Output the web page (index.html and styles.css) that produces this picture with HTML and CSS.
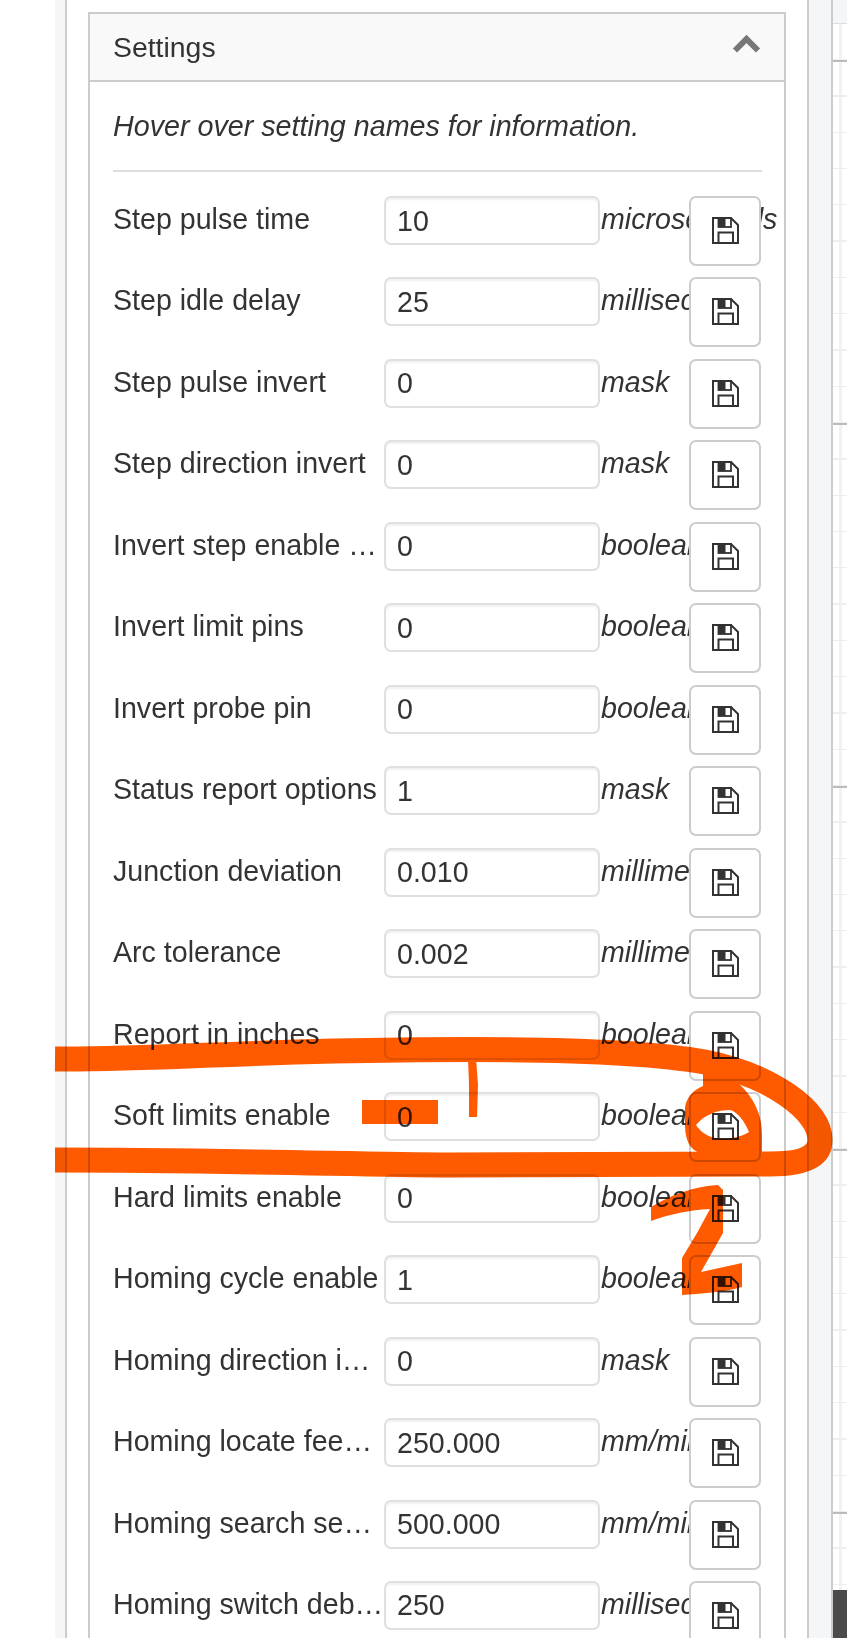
FILE: index.html
```html
<!DOCTYPE html>
<html lang="en">
<head>
    <meta charset="UTF-8">
    <meta name="viewport" content="width=device-width, initial-scale=1.0">
    <title>Settings</title>
    <link rel="stylesheet" href="styles.css">
</head>
<body>
    <svg width="0" height="0" class="defs">
        <symbol id="save" viewBox="0 0 27 27">
            <path d="M1 1H19L26 8V26H1Z" fill="none" stroke="#333" stroke-width="2"/>
            <rect x="6.5" y="1" width="12.5" height="9" fill="none" stroke="#333" stroke-width="1.8"/>
            <rect x="6.5" y="1" width="7" height="9" fill="#333"/>
            <rect x="6.5" y="15.5" width="14.5" height="10.5" fill="none" stroke="#333" stroke-width="2"/>
        </symbol>
    </svg>
    <div class="page">
        <div class="side-strip"></div>
        <div class="wrap">
            <div class="panel">
                <div class="panel-heading">
                    <span class="panel-title">Settings</span>
                    <svg class="chevron" viewBox="0 0 29 18"><path d="M3 15.5L14.5 4L26 15.5" fill="none" stroke="#777" stroke-width="6"/></svg>
                </div>
                <div class="panel-body">
                    <p class="hint">Hover over setting names for information.</p>
                    <hr class="divider">
                    <div id="rows">
                        <div class="row"><span class="name">Step pulse time</span><input class="value" value="10"><span class="unit">microseconds</span><button class="save"><svg><use href="#save"/></svg></button></div>
                        <div class="row"><span class="name">Step idle delay</span><input class="value" value="25"><span class="unit">milliseconds</span><button class="save"><svg><use href="#save"/></svg></button></div>
                        <div class="row"><span class="name">Step pulse invert</span><input class="value" value="0"><span class="unit">mask</span><button class="save"><svg><use href="#save"/></svg></button></div>
                        <div class="row"><span class="name">Step direction invert</span><input class="value" value="0"><span class="unit">mask</span><button class="save"><svg><use href="#save"/></svg></button></div>
                        <div class="row"><span class="name">Invert step enable pin</span><input class="value" value="0"><span class="unit">boolean</span><button class="save"><svg><use href="#save"/></svg></button></div>
                        <div class="row"><span class="name">Invert limit pins</span><input class="value" value="0"><span class="unit">boolean</span><button class="save"><svg><use href="#save"/></svg></button></div>
                        <div class="row"><span class="name">Invert probe pin</span><input class="value" value="0"><span class="unit">boolean</span><button class="save"><svg><use href="#save"/></svg></button></div>
                        <div class="row"><span class="name">Status report options</span><input class="value" value="1"><span class="unit">mask</span><button class="save"><svg><use href="#save"/></svg></button></div>
                        <div class="row"><span class="name">Junction deviation</span><input class="value" value="0.010"><span class="unit">millimeters</span><button class="save"><svg><use href="#save"/></svg></button></div>
                        <div class="row"><span class="name">Arc tolerance</span><input class="value" value="0.002"><span class="unit">millimeters</span><button class="save"><svg><use href="#save"/></svg></button></div>
                        <div class="row"><span class="name">Report in inches</span><input class="value" value="0"><span class="unit">boolean</span><button class="save"><svg><use href="#save"/></svg></button></div>
                        <div class="row"><span class="name">Soft limits enable</span><input class="value" value="0"><span class="unit">boolean</span><button class="save"><svg><use href="#save"/></svg></button></div>
                        <div class="row"><span class="name">Hard limits enable</span><input class="value" value="0"><span class="unit">boolean</span><button class="save"><svg><use href="#save"/></svg></button></div>
                        <div class="row"><span class="name">Homing cycle enable</span><input class="value" value="1"><span class="unit">boolean</span><button class="save"><svg><use href="#save"/></svg></button></div>
                        <div class="row"><span class="name">Homing direction invert</span><input class="value" value="0"><span class="unit">mask</span><button class="save"><svg><use href="#save"/></svg></button></div>
                        <div class="row"><span class="name">Homing locate feed rate</span><input class="value" value="250.000"><span class="unit">mm/min</span><button class="save"><svg><use href="#save"/></svg></button></div>
                        <div class="row"><span class="name">Homing search seek rate</span><input class="value" value="500.000"><span class="unit">mm/min</span><button class="save"><svg><use href="#save"/></svg></button></div>
                        <div class="row"><span class="name">Homing switch debounce</span><input class="value" value="250"><span class="unit">milliseconds</span><button class="save"><svg><use href="#save"/></svg></button></div>
                    </div>
                </div>
            </div>
        </div>
        <div class="gutter"></div>
        <div class="chart">
            <div class="chart-head"></div>
            <div class="chart-grid"></div>
            <div class="chart-foot"></div>
        </div>
    </div>

    <!-- marker scribbles on top of the screenshot -->
    <svg class="scribble" viewBox="0 0 847 1638" width="847" height="1638">
        <path d="M55 1059C150 1060 250 1051 400 1050C550 1048 650 1052 705 1062C770 1075 820 1110 820 1140C820 1158 800 1164 770 1164L450 1165C350 1164 200 1160 55 1160" fill="none" stroke="#ff5a00" stroke-width="25"/>
        <path fill-rule="evenodd" fill="#ff5a00" d="M703 1072H728L745 1090C757 1104 762 1118 762 1135V1153H700C690 1150 685 1140 685 1125V1108C686 1098 693 1090 703 1086ZM696 1125C705 1114 718 1110 730 1110C738 1112 745 1122 749 1132C740 1138 725 1140 715 1138C706 1136 700 1131 696 1125Z"/>
        <path fill="#ff5a00" d="M468 1058H476L478 1085L477 1117H469L469 1085Z"/>
        <rect x="362" y="1100" width="76" height="24" fill="#ff5a00"/>
        <path fill="#ff5a00" d="M651 1207C670 1195 695 1186 718 1185L723 1190V1233L701 1272L742 1263V1287C725 1292 700 1294 682 1295V1258L697 1233L710 1209C690 1210 670 1214 651 1221Z"/>
    </svg>
</body>
</html>
```
FILE: styles.css
```css
* {
    box-sizing: border-box;
}
html, body {
    margin: 0;
    height: 1638px;
    overflow: hidden;
    background: #fff;
}
body {
    font-family: "Liberation Sans", Arial, sans-serif;
    color: #333;
    position: relative;
}
.defs {
    position: absolute;
}
.page {
    display: flex;
    width: 847px;
    height: 1638px;
    padding-left: 55px;
}
.side-strip {
    width: 12px;
    background: #f5f6f8;
    border-right: 2px solid #ccc;
}
.wrap {
    width: 742px;
    padding: 12px 23px 0 21px;
    border-right: 2px solid #ccc;
}
.panel {
    width: 698px;
    height: 1700px;
    border: 2px solid #ccc;
    border-bottom: none;
}
.panel-heading {
    display: flex;
    justify-content: space-between;
    height: 68px;
    padding: 17px 23px 0 23px;
    background: #f9f9f9;
    border-bottom: 2px solid #ccc;
}
.panel-title {
    font-size: 28.4px;
    line-height: 32px;
}
.chevron {
    width: 29px;
    height: 18px;
    margin-top: 4px;
}
.panel-body {
    padding: 0 22px 0 23px;
}
.hint {
    margin: 0;
    padding-top: 28px;
    font-size: 28.7px;
    line-height: 32px;
    font-style: italic;
}
.divider {
    margin: 28px 0 24px;
    border: none;
    border-top: 2px solid #ddd;
}
.row {
    display: grid;
    grid-template-columns: 271px 216px 88px 73px;
    height: 81.47px;
    align-items: start;
}
.name {
    width: 271px;
    font-size: 28.6px;
    line-height: 47px;
    white-space: nowrap;
    overflow: hidden;
    text-overflow: ellipsis;
}
.value {
    width: 216px;
    height: 49px;
    padding: 1px 11px 0;
    font-family: inherit;
    font-size: 28.6px;
    color: #333;
    border: 2px solid #e0e0e0;
    border-radius: 7px;
    box-shadow: inset 0 2px 2px rgba(0, 0, 0, .06);
    outline: none;
}
.unit {
    padding-left: 1px;
    font-size: 28.6px;
    line-height: 47px;
    font-style: italic;
    white-space: nowrap;
}
.save {
    position: relative;
    z-index: 1;
    display: flex;
    justify-content: center;
    justify-self: end;
    width: 72px;
    height: 70px;
    padding: 19px 0 0;
    background: #fff;
    border: 2px solid #ccc;
    border-radius: 7px;
}
.save svg {
    width: 27px;
    height: 27px;
}
.gutter {
    width: 24px;
    background: #f5f6f8;
    border-right: 2px solid #ccc;
}
.chart {
    display: flex;
    flex-direction: column;
    width: 14px;
}
.chart-head {
    height: 24px;
    background: #f5f6f8;
    border-bottom: 1px solid #ddd;
}
.chart-grid {
    flex: 1;
    background:
        repeating-linear-gradient(to bottom, transparent 0, transparent 36px, #bbb 36px, #bbb 38px, transparent 38px, transparent 363px),
        repeating-linear-gradient(to bottom, transparent 0, transparent 35px, #eee 35px, #eee 36.3px),
        linear-gradient(to right, transparent 6px, #f2f2f2 6px, #f2f2f2 9px, transparent 9px);
}
.chart-foot {
    height: 48px;
    background: #4a4a4a;
}
.scribble {
    position: absolute;
    left: 0;
    top: 0;
    z-index: 5;
    mix-blend-mode: multiply;
    pointer-events: none;
}
```
